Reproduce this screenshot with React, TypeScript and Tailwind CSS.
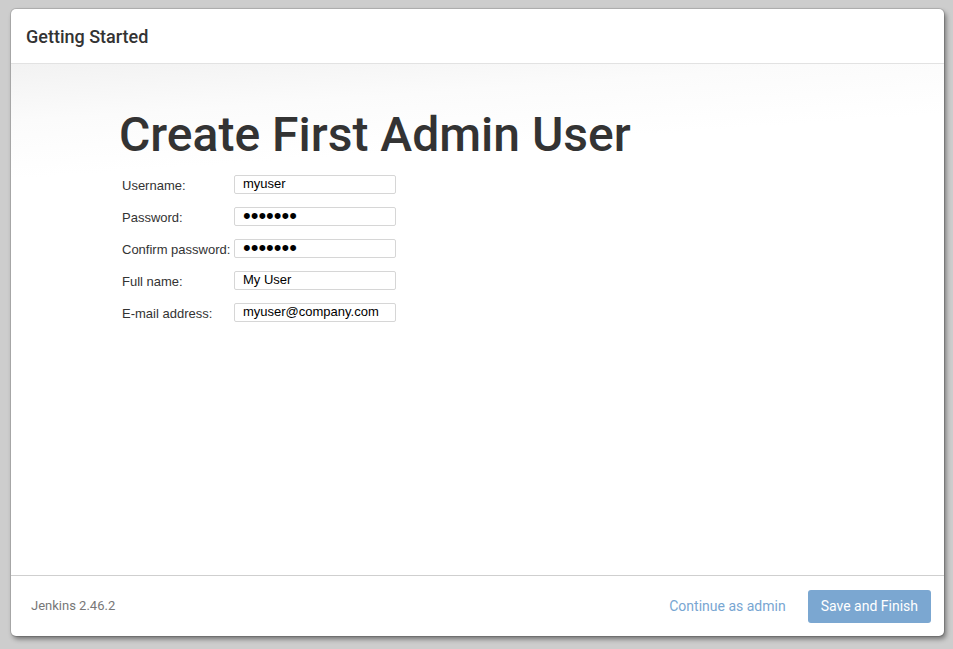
import React from 'react';

const fields = [
  { label: 'Username:', type: 'text', value: 'myuser' },
  { label: 'Password:', type: 'password', value: 'myuser1' },
  { label: 'Confirm password:', type: 'password', value: 'myuser1' },
  { label: 'Full name:', type: 'text', value: 'My User' },
  { label: 'E-mail address:', type: 'text', value: 'myuser@company.com' },
];

const App: React.FC = () => {
  return (
    <div className="h-screen w-screen bg-[#cdcdcd] pt-[9px] pl-[11px] pr-[9px] pb-[13px]">
      <div className="flex h-full flex-col overflow-hidden rounded-[5px] bg-white shadow-[0_0_0_1px_rgba(0,0,0,0.12),2px_3px_5px_rgba(0,0,0,0.45)]">
        <header className="flex h-[55px] shrink-0 items-center border-b border-[#e2e2e2] px-[15px]">
          <h1 className="font-['Roboto',sans-serif] text-[18px] font-medium text-[#333]">Getting Started</h1>
        </header>

        <main className="flex-1 bg-[linear-gradient(176deg,#f2f2f2_0%,#fbfbfb_10%,#ffffff_20%)] pl-[108px] pt-[47px]">
          <h2 className="font-['Roboto',sans-serif] text-[48px] font-medium leading-[48px] text-[#333]">
            Create First Admin User
          </h2>
          <div className="mt-[9px] grid grid-cols-[112px_162px] pl-[3px] font-['Liberation_Sans',Arial,sans-serif] text-[13px]">
            {fields.map((f) => (
              <React.Fragment key={f.label}>
                <label className="flex h-[32px] items-center pt-[4px] text-[#333]">{f.label}</label>
                <div className="flex h-[32px] items-center">
                  <input
                    type={f.type}
                    defaultValue={f.value}
                    readOnly
                    className={
                      f.type === 'password'
                        ? 'h-[19px] w-[162px] rounded-[2px] border border-[#d6d6d6] bg-white px-[8px] text-[22px] leading-[17px] text-black outline-none'
                        : 'h-[19px] w-[162px] rounded-[2px] border border-[#d6d6d6] bg-white px-[8px] text-[13px] text-black outline-none'
                    }
                  />
                </div>
              </React.Fragment>
            ))}
          </div>
        </main>

        <footer className="flex h-[61px] shrink-0 items-center justify-between border-t border-[#cfcfcf] pl-[20px] pr-[13px] font-['Roboto',sans-serif]">
          <span className="text-[13px] text-[#777]">Jenkins 2.46.2</span>
          <div className="flex items-center gap-[22px]">
            <button className="text-[14px] text-[#78a6d2]">Continue as admin</button>
            <button className="h-[33px] rounded-[3px] bg-[#7ba7d1] px-[13px] text-[14px] text-white">Save and Finish</button>
          </div>
        </footer>
      </div>
    </div>
  );
};

export default App;
